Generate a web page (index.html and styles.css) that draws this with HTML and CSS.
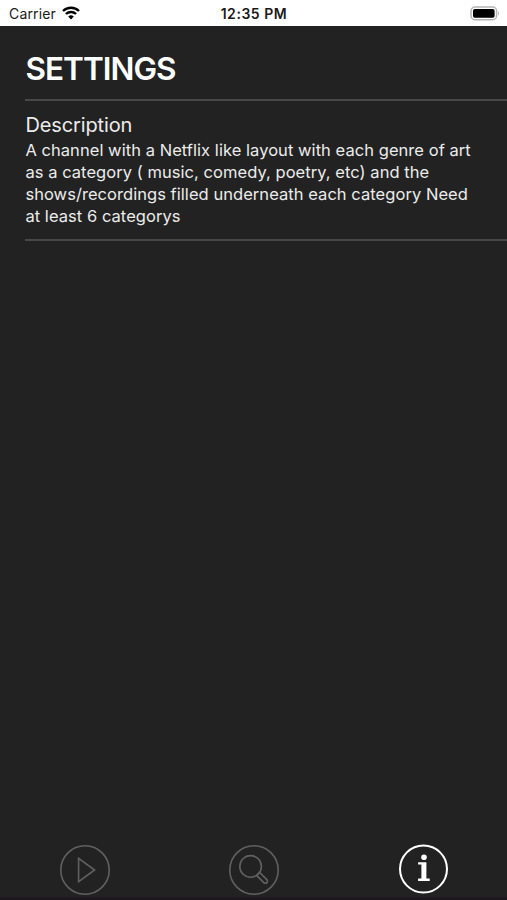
FILE: index.html
```html
<!DOCTYPE html>
<html lang="en">
<head>
    <meta charset="UTF-8">
    <meta name="viewport" content="width=device-width, initial-scale=1.0">
    <title>Settings</title>
    <link rel="stylesheet" href="styles.css">
</head>
<body>

    <header class="status-bar">
        <div class="carrier">
            <span>Carrier</span>
            <svg class="wifi" width="18" height="14" viewBox="0 0 18 14">
                <path d="M1 5 A11.5 11.5 0 0 1 17 5" />
                <path d="M3.9 8 A7.4 7.4 0 0 1 14.1 8" />
                <path class="dot" d="M9 13.4 L6.2 10.6 A4 4 0 0 1 11.8 10.6 Z" />
            </svg>
        </div>
        <div class="time">12:35 PM</div>
        <div class="battery">
            <svg width="31" height="15" viewBox="0 0 31 15">
                <rect x="1" y="1.1" width="25.6" height="12.6" rx="4" fill="#fff" stroke="#b5b5b5" stroke-width="1.5" />
                <rect x="3" y="3" width="21.6" height="8.8" rx="1.8" fill="#000" />
                <path d="M28.2 5 Q30.2 7.4 28.2 9.8 Z" fill="#b5b5b5" />
            </svg>
        </div>
    </header>

    <main class="content">
        <h1>SETTINGS</h1>
        <section class="description">
            <h2>Description</h2>
            <p>A channel with a Netflix like layout with each genre of art<br>
            as a category ( music, comedy, poetry, etc) and the<br>
            shows/recordings filled underneath each category Need<br>
            at least 6 categorys</p>
        </section>
    </main>

    <nav class="tab-bar">
        <a class="tab">
            <svg width="52" height="52" viewBox="0 0 52 52">
                <circle cx="26" cy="26" r="24.2" />
                <path d="M19.6 14.4 V37.6 L35.6 26 Z" />
            </svg>
        </a>
        <a class="tab">
            <svg width="52" height="52" viewBox="0 0 52 52">
                <circle cx="26" cy="26" r="24.2" />
                <circle cx="22.6" cy="22.4" r="10.8" />
                <path d="M28.6 31.4 L31.6 28.4 L38.8 35.6 A2.1 2.1 0 0 1 38.8 38.6 A2.1 2.1 0 0 1 35.8 38.6 Z" />
            </svg>
        </a>
        <a class="tab active">
            <svg width="52" height="52" viewBox="0 0 52 52">
                <circle cx="26.5" cy="25" r="23.5" />
                <circle class="fill" cx="27" cy="13.2" r="2.8" />
                <path class="fill" d="M21.1 18.2 H29.4 V34.6 H32.7 V36.9 H21.1 V34.6 H24.4 V20.4 H21.1 Z" />
            </svg>
        </a>
    </nav>

</body>
</html>
```
FILE: styles.css
```css
* {
    box-sizing: border-box;
}
body {
    margin: 0;
    height: 100vh;
    display: flex;
    flex-direction: column;
    background-color: #222222;
    color: #ececec;
    font-family: Inter, "Liberation Sans", sans-serif;
    overflow: hidden;
}
.status-bar {
    height: 25.5px;
    display: grid;
    grid-template-columns: 1fr auto 1fr;
    align-items: center;
    padding: 1px 6px 0 9px;
    background-color: #fff;
    color: #1a1a1a;
    font-size: 14px;
}
.carrier {
    display: flex;
    align-items: center;
    gap: 6px;
    letter-spacing: 0.15px;
}
.wifi {
    fill: none;
    stroke: #000;
    stroke-width: 2.4;
}
.wifi .dot {
    fill: #000;
    stroke: none;
}
.time {
    font-weight: 600;
    letter-spacing: 0.55px;
    margin-right: 2px;
}
.battery {
    display: flex;
    justify-content: flex-end;
}
.content {
    flex: 1;
    padding-left: 25.4px;
}
h1 {
    margin: 0;
    height: 73.5px;
    padding-top: 23px;
    font-size: 31.5px;
    font-weight: 600;
    line-height: 40px;
    letter-spacing: -0.95px;
    color: #fff;
}
.description {
    height: 142px;
    padding-top: 11px;
    border-top: 2px solid #484848;
    border-bottom: 2px solid #484848;
}
h2 {
    margin: 0;
    font-size: 20px;
    font-weight: 400;
    line-height: 26px;
    letter-spacing: -0.12px;
}
p {
    margin: 0;
    padding-top: 1px;
    font-size: 16.5px;
    line-height: 22px;
    letter-spacing: 0.05px;
    white-space: nowrap;
}
.tab-bar {
    height: 60px;
    display: grid;
    grid-template-columns: repeat(3, 1fr);
    justify-items: center;
    padding-top: 3.5px;
    border-bottom: 3px solid #1c181d;
}
.tab {
    height: 52px;
}
.tab svg {
    fill: none;
    stroke: #606060;
    stroke-width: 1.6;
}
.tab.active svg {
    stroke: #fff;
    stroke-width: 2;
}
.tab.active .fill {
    fill: #fff;
    stroke: none;
}
```
